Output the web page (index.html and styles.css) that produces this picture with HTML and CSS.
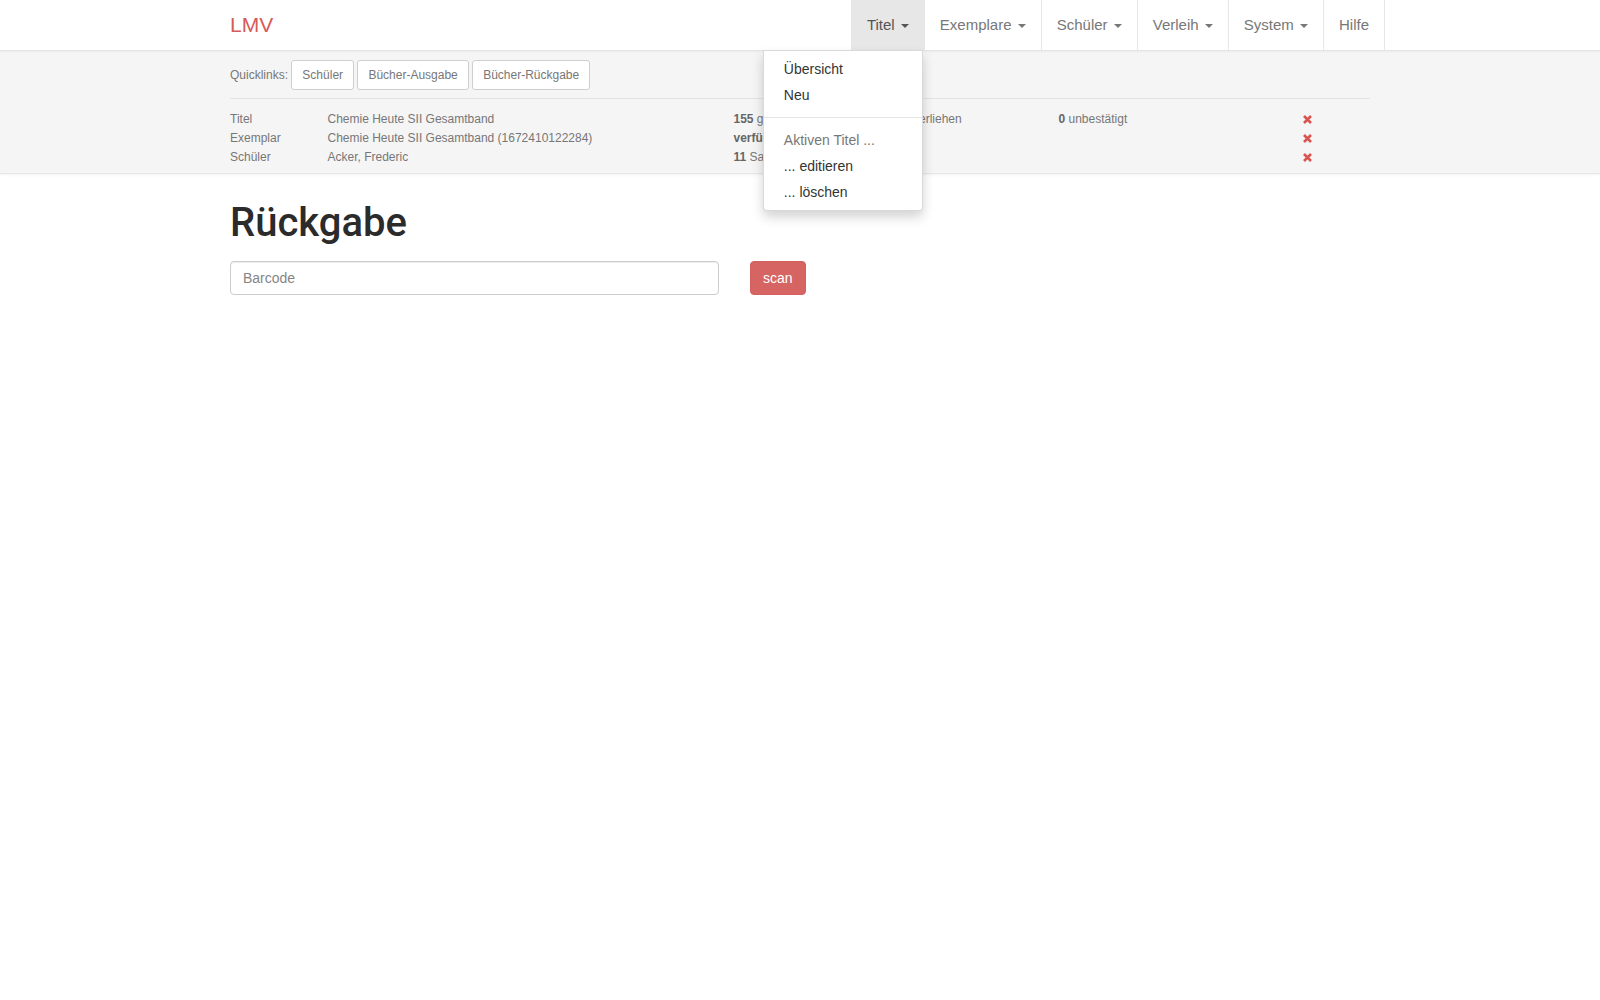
FILE: index.html
```html
<!DOCTYPE html>
<html lang="de">
<head>
<meta charset="utf-8">
<title>LMV – Rückgabe</title>
<link rel="stylesheet" href="styles.css">
</head>
<body>
<nav class="navbar">
  <div class="container navbar-inner">
    <a class="brand" href="#">LMV</a>
    <ul class="nav">
      <li class="nav-item dropdown active">
        <a href="#">Titel <span class="caret"></span></a>
        <ul class="dropdown-menu">
          <li><a href="#">Übersicht</a></li>
          <li><a href="#">Neu</a></li>
          <li class="divider"></li>
          <li class="dropdown-header">Aktiven Titel ...</li>
          <li><a href="#">... editieren</a></li>
          <li><a href="#">... löschen</a></li>
        </ul>
      </li>
      <li class="nav-item"><a href="#">Exemplare <span class="caret"></span></a></li>
      <li class="nav-item"><a href="#">Schüler <span class="caret"></span></a></li>
      <li class="nav-item"><a href="#">Verleih <span class="caret"></span></a></li>
      <li class="nav-item"><a href="#">System <span class="caret"></span></a></li>
      <li class="nav-item"><a href="#">Hilfe</a></li>
    </ul>
  </div>
</nav>

<div class="subbar">
  <div class="container">
    <div class="quicklinks">Quicklinks: <a class="btn" href="#">Schüler</a> <a class="btn" href="#">Bücher-Ausgabe</a> <a class="btn" href="#">Bücher-Rückgabe</a></div>
    <hr class="sep">
    <div class="status">
      <span class="label">Titel</span>
      <span class="value">Chemie Heute SII Gesamtband</span>
      <span class="stat"><b>155</b> gesamt / <b>136</b> vorhanden / <b>19</b> verliehen</span>
      <span class="stat"><b>0</b> unbestätigt</span>
      <span class="remove"><svg width="9" height="9" viewBox="0 0 9 9"><path d="M1 1 L8 8 M8 1 L1 8" stroke="currentColor" stroke-width="2.6"/></svg></span>

      <span class="label">Exemplar</span>
      <span class="value">Chemie Heute SII Gesamtband (1672410122284)</span>
      <span class="stat"><b>verfügbar</b></span>
      <span class="stat"></span>
      <span class="remove"><svg width="9" height="9" viewBox="0 0 9 9"><path d="M1 1 L8 8 M8 1 L1 8" stroke="currentColor" stroke-width="2.6"/></svg></span>

      <span class="label">Schüler</span>
      <span class="value">Acker, Frederic</span>
      <span class="stat"><b>11</b> Sachen ausgeliehen</span>
      <span class="stat"></span>
      <span class="remove"><svg width="9" height="9" viewBox="0 0 9 9"><path d="M1 1 L8 8 M8 1 L1 8" stroke="currentColor" stroke-width="2.6"/></svg></span>
    </div>
  </div>
</div>

<main class="container main">
  <h1 class="title">Rückgabe</h1>
  <div class="scan-row">
    <input class="barcode" type="text" placeholder="Barcode">
    <button class="btn-scan" type="button">scan</button>
  </div>
</main>
</body>
</html>
```

FILE: styles.css
```css
* { box-sizing: border-box; }

html, body {
  margin: 0;
  padding: 0;
  background: #fff;
  font-family: "Liberation Sans", Arial, sans-serif;
  font-size: 14px;
  line-height: 20px;
  color: #333;
}

a { text-decoration: none; }

.container {
  width: 1170px;
  margin: 0 auto;
  padding: 0 15px;
}

/* Navbar */
.navbar {
  position: relative;
  z-index: 10;
  background: #fff;
  border-bottom: 1px solid #e3e3e3;
  box-shadow: 0 1px 2px rgba(0, 0, 0, 0.04);
}

.navbar-inner {
  display: flex;
  justify-content: space-between;
  align-items: flex-start;
}

.brand {
  display: block;
  margin-left: -15px;
  padding: 15px;
  height: 50px;
  font-size: 21px;
  line-height: 20px;
  color: #d65a59;
}

.nav {
  display: flex;
  list-style: none;
  margin: 0 -15px 0 0;
  padding: 0;
}

.nav-item {
  position: relative;
  border-right: 1px solid #e7e7e7;
}

.nav-item:first-child {
  border-left: 1px solid #e7e7e7;
}

.nav-item > a {
  display: block;
  padding: 15px;
  font-size: 15px;
  line-height: 20px;
  color: #777;
}

.nav-item.active > a {
  background: #e7e7e7;
  color: #555;
}

.caret {
  display: inline-block;
  width: 0;
  height: 0;
  margin-left: 2px;
  vertical-align: middle;
  border-top: 4px solid;
  border-left: 4px solid transparent;
  border-right: 4px solid transparent;
}

/* Dropdown */
.dropdown-menu {
  position: absolute;
  top: 100%;
  right: 1px;
  min-width: 160px;
  margin: 0;
  padding: 5px 0;
  list-style: none;
  background: #fff;
  border: 1px solid rgba(0, 0, 0, 0.15);
  border-radius: 0 0 4px 4px;
  box-shadow: 0 6px 12px rgba(0, 0, 0, 0.175);
  font-size: 14px;
}

.dropdown-menu a {
  display: block;
  padding: 3px 20px;
  line-height: 20px;
  color: #333;
  white-space: nowrap;
}

.dropdown-menu .divider {
  height: 1px;
  margin: 9px 0;
  background: #e5e5e5;
}

.dropdown-menu .dropdown-header {
  padding: 3px 20px;
  line-height: 20px;
  color: #777;
  white-space: nowrap;
}

/* Sub bar */
.subbar {
  background: #f5f5f5;
  padding: 9px 0 6px;
  border-bottom: 1px solid #e6e6e6;
  box-shadow: 0 1px 3px rgba(0, 0, 0, 0.05);
}

.quicklinks {
  font-size: 12px;
  line-height: 30px;
  color: #777;
}

.btn {
  display: inline-block;
  padding: 5px 10px;
  font-size: 12px;
  line-height: 18px;
  color: #777;
  background: #fff;
  border: 1px solid #cfcfcf;
  border-radius: 3px;
  vertical-align: top;
}

.sep {
  margin: 8px 0 11px;
  border: 0;
  border-top: 1px solid #e3e3e3;
  height: 0;
}

.status {
  display: grid;
  grid-template-columns: 97.5px 406px 325px 244px auto;
  font-size: 12px;
  line-height: 19px;
  color: #777;
}

.status b { color: #666; }

.remove {
  display: flex;
  align-items: center;
  color: #d9534f;
}

.remove svg { display: block; }

/* Main */
.title {
  margin: 27px 0 16px;
  font-family: Roboto, "Liberation Sans", sans-serif;
  font-weight: 500;
  font-size: 40px;
  line-height: 44px;
  color: #2b2b2b;
}

.scan-row {
  display: flex;
  align-items: flex-start;
}

.barcode {
  width: 489px;
  height: 34px;
  padding: 6px 12px;
  font-family: "Liberation Sans", Arial, sans-serif;
  font-size: 14px;
  color: #555;
  background: #fff;
  border: 1px solid #ccc;
  border-radius: 4px;
  box-shadow: inset 0 1px 1px rgba(0, 0, 0, 0.075);
  outline: none;
}

.barcode::placeholder { color: #858585; }

.btn-scan {
  margin-left: 31px;
  height: 34px;
  padding: 6px 12px;
  font-family: "Liberation Sans", Arial, sans-serif;
  font-size: 14px;
  line-height: 20px;
  color: #fff;
  background: #d66463;
  border: 1px solid #d35f5e;
  border-radius: 4px;
}
```
